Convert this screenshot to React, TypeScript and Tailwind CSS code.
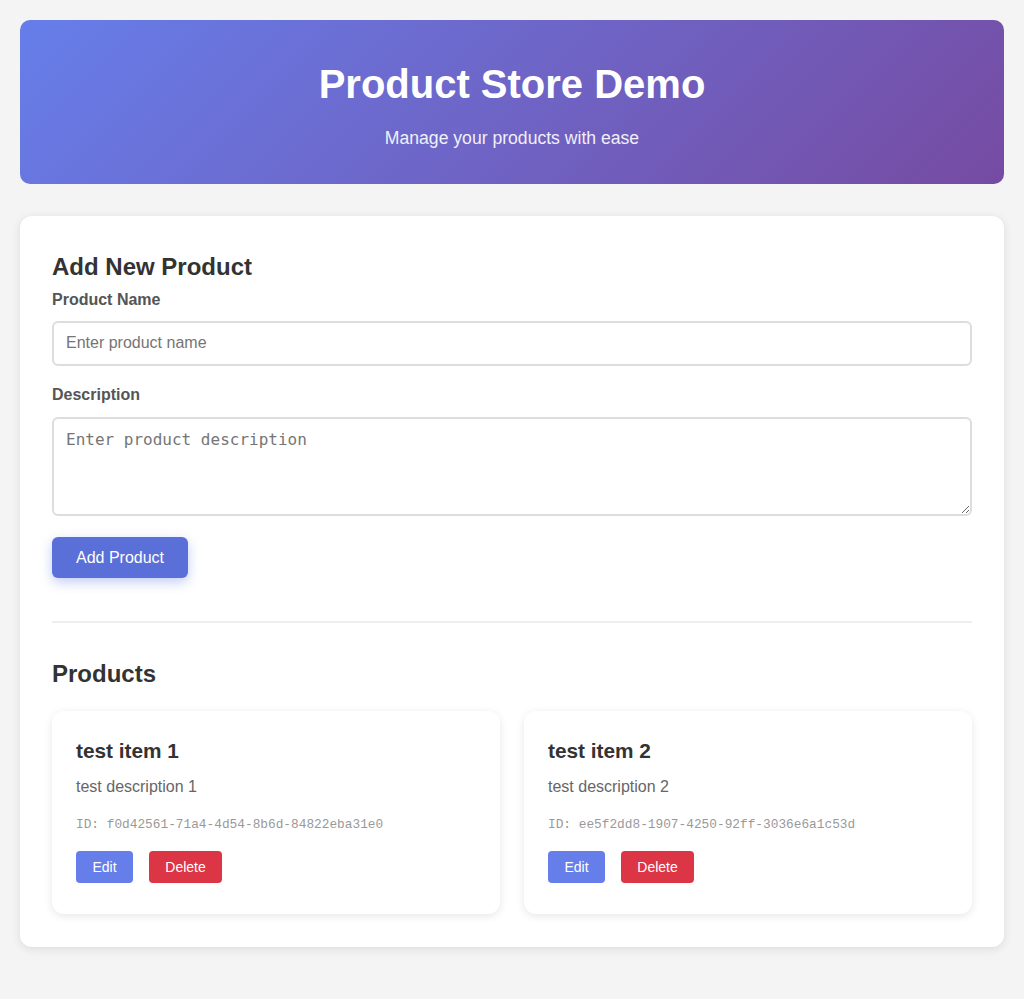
import { useState } from "react";

type Product = {
    id: string;
    name: string;
    description: string;
};

const initialProducts: Product[] = [
    { id: "f0d42561-71a4-4d54-8b6d-84822eba31e0", name: "test item 1", description: "test description 1" },
    { id: "ee5f2dd8-1907-4250-92ff-3036e6a1c53d", name: "test item 2", description: "test description 2" },
];

export default function App() {
    const [products, setProducts] = useState<Product[]>(initialProducts);
    const [name, setName] = useState("");
    const [description, setDescription] = useState("");

    const handleAdd = () => {
        if (!name.trim()) return;
        setProducts([...products, { id: crypto.randomUUID(), name, description }]);
        setName("");
        setDescription("");
    };

    const handleDelete = (id: string) => {
        setProducts(products.filter((p) => p.id !== id));
    };

    return (
        <div className="min-h-[999px] bg-[#f4f4f4] p-5 font-['Liberation_Sans',Arial,sans-serif]">
            <header className="rounded-[10px] bg-[linear-gradient(135deg,#667eea_0%,#764ba2_100%)] pt-[41px] pb-[36px] text-center text-white">
                <h1 className="text-[40px] leading-[46px] font-bold">Product Store Demo</h1>
                <p className="mt-[21px] text-[17.6px] leading-5 opacity-90">Manage your products with ease</p>
            </header>

            <main className="mt-8 rounded-xl bg-white px-8 pt-[37px] pb-[33px] shadow-[0_2px_10px_rgba(0,0,0,0.1)]">
                <h2 className="text-2xl leading-7 font-bold text-[#333]">Add New Product</h2>

                <label className="mt-[10px] block text-base leading-[18px] font-bold text-[#555]">Product Name</label>
                <input
                    value={name}
                    onChange={(e) => setName(e.target.value)}
                    placeholder="Enter product name"
                    className="mt-[12px] block h-[45px] w-full rounded-md border-2 border-[#ddd] px-3 pb-px text-base text-[#333] placeholder:text-[#757575] outline-none"
                />

                <label className="mt-[20px] block text-base leading-[18px] font-bold text-[#555]">Description</label>
                <textarea
                    value={description}
                    onChange={(e) => setDescription(e.target.value)}
                    placeholder="Enter product description"
                    className="mt-[13px] block h-[99px] w-full rounded-md border-2 border-[#ddd] px-3 pt-[11px] pb-3 font-['DejaVu_Sans_Mono',monospace] text-base leading-[19px] text-[#333] placeholder:text-[#757575] outline-none"
                />

                <button
                    onClick={handleAdd}
                    className="mt-[21px] h-[41px] rounded-md bg-[#5a6fd8] px-6 text-base text-white shadow-[0_4px_12px_rgba(102,126,234,0.4)]"
                >
                    Add Product
                </button>

                <hr className="mt-[43px] border-t-2 border-[#eee]" />

                <h2 className="mt-[37px] text-2xl leading-7 font-bold text-[#333]">Products</h2>

                <div className="mt-[23px] grid grid-cols-2 gap-6">
                    {products.map((product) => (
                        <div key={product.id} className="rounded-xl bg-white px-6 pt-[25px] pb-[31px] shadow-[0_2px_8px_rgba(0,0,0,0.1)]">
                            <h3 className="text-[20.8px] leading-[30px] font-bold text-[#333]">{product.name}</h3>
                            <p className="mt-[11px] text-base leading-5 text-[#666]">{product.description}</p>
                            <p className="mt-5 font-['Liberation_Mono',monospace] text-[12.8px] leading-4 text-[#999]">ID: {product.id}</p>
                            <div className="mt-[18px] flex gap-4">
                                <button className="h-8 w-[57px] rounded bg-[#667eea] text-sm text-white">Edit</button>
                                <button
                                    onClick={() => handleDelete(product.id)}
                                    className="h-8 w-[73px] rounded bg-[#dc3545] text-sm text-white"
                                >
                                    Delete
                                </button>
                            </div>
                        </div>
                    ))}
                </div>
            </main>
        </div>
    );
}
